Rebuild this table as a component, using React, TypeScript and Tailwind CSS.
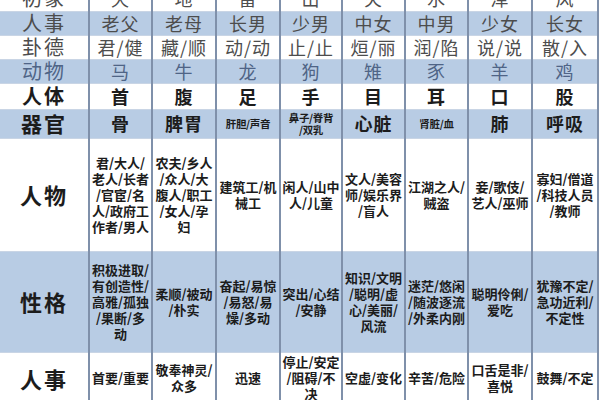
import React from "react";

type Cell = string | string[];

interface Row {
  label: string;
  cells: Cell[];
  height: string;
  blue?: boolean;
  tone: "grey" | "animal" | "bold";
  labelSize: string;
  dense?: boolean;
  small?: number[];
}

const rows: Row[] = [
  {
    label: "初象",
    cells: ["天", "地", "雷", "山", "火", "水", "泽", "风"],
    height: "h-[25px]",
    tone: "grey",
    labelSize: "text-[20px]",
  },
  {
    label: "人事",
    cells: ["老父", "老母", "长男", "少男", "中女", "中男", "少女", "长女"],
    height: "h-[24px]",
    blue: true,
    tone: "grey",
    labelSize: "text-[20px]",
  },
  {
    label: "卦德",
    cells: ["君/健", "藏/顺", "动/动", "止/止", "烜/丽", "润/陷", "说/说", "散/入"],
    height: "h-[24px]",
    tone: "grey",
    labelSize: "text-[20px]",
  },
  {
    label: "动物",
    cells: ["马", "牛", "龙", "狗", "雉", "豕", "羊", "鸡"],
    height: "h-[24px]",
    blue: true,
    tone: "animal",
    labelSize: "text-[20px]",
  },
  {
    label: "人体",
    cells: ["首", "腹", "足", "手", "目", "耳", "口", "股"],
    height: "h-[26px]",
    tone: "bold",
    labelSize: "text-[20px]",
  },
  {
    label: "器官",
    cells: ["骨", "脾胃", "肝胆/声音", ["鼻子/脊背", "/双乳"], "心脏", "肾脏/血", "肺", "呼吸"],
    height: "h-[29px]",
    blue: true,
    tone: "bold",
    labelSize: "text-[21px]",
    small: [2, 3, 5],
  },
  {
    label: "人物",
    cells: [
      ["君/大人/", "老人/长者", "/官宦/名", "人/政府工", "作者/男人"],
      ["农夫/乡人", "/众人/大", "腹人/职工", "/女人/孕", "妇"],
      ["建筑工/机", "械工"],
      ["闲人/山中", "人/儿童"],
      ["文人/美容", "师/娱乐界", "/盲人"],
      ["江湖之人/", "贼盗"],
      ["妾/歌伎/", "艺人/巫师"],
      ["寡妇/僧道", "/科技人员", "/教师"],
    ],
    height: "h-[113px]",
    tone: "bold",
    labelSize: "text-[22px]",
    dense: true,
  },
  {
    label: "性格",
    cells: [
      ["积极进取/", "有创造性/", "高雅/孤独", "/果断/多", "动"],
      ["柔顺/被动", "/朴实"],
      ["奋起/易惊", "/易怒/易", "燥/多动"],
      ["突出/心结", "/安静"],
      ["知识/文明", "/聪明/虚", "心/美丽/", "风流"],
      ["迷茫/悠闲", "/随波逐流", "/外柔内刚"],
      ["聪明伶俐/", "爱吃"],
      ["犹豫不定/", "急功近利/", "不定性"],
    ],
    height: "h-[101px]",
    blue: true,
    tone: "bold",
    labelSize: "text-[22px]",
    dense: true,
  },
  {
    label: "人事",
    cells: [
      "首要/重要",
      ["敬奉神灵/", "众多"],
      "迅速",
      ["停止/安定", "/阻碍/不", "决"],
      "空虚/变化",
      "辛苦/危险",
      ["口舌是非/", "喜悦"],
      "鼓舞/不定",
    ],
    height: "h-[52px]",
    tone: "bold",
    labelSize: "text-[22px]",
    dense: true,
  },
];

const widths = [
  "w-[89px]",
  "w-[63px]",
  "w-[64px]",
  "w-[64px]",
  "w-[62px]",
  "w-[63px]",
  "w-[63px]",
  "w-[64px]",
  "w-[66px]",
];

const toneClass = {
  grey: "font-normal text-[#4d4d4d]",
  animal: "font-normal text-[#4f6486]",
  bold: "font-bold text-[#1c1c1c]",
};

function CellText({ value }: { value: Cell }) {
  const lines = Array.isArray(value) ? value : [value];
  return (
    <>
      {lines.map((line, i) => (
        <div key={i} className="whitespace-nowrap">
          {line}
        </div>
      ))}
    </>
  );
}

export default function App() {
  return (
    <div
      className="w-[600px] h-[400px] overflow-hidden bg-white"
      style={{ fontFamily: '"Noto Sans CJK SC", "Noto Sans", sans-serif' }}
    >
      <table className="-mt-[14px] border-collapse table-fixed w-[598px]">
        <colgroup>
          {widths.map((w, i) => (
            <col key={i} className={w} />
          ))}
        </colgroup>
        <tbody>
          {rows.map((row, r) => (
            <tr
              key={r}
              className={`${row.height} ${row.blue ? "bg-[#b8cce4]" : "bg-white"} ${toneClass[row.tone]}`}
            >
              <td className={`${row.labelSize} tracking-[2px] text-center align-middle leading-[1.1] border-r-2 border-b border-r-[#7f90aa] border-b-[#c9d5e5] p-0`}>
                {row.label}
              </td>
              {row.cells.map((cell, c) => {
                const isSmall = row.small?.includes(c);
                const size = isSmall
                  ? "text-[10.5px] leading-[12px] tracking-[-0.3px]"
                  : row.dense
                    ? "text-[13px] leading-[16px]"
                    : "text-[18px] leading-[1.15] tracking-[1px]";
                return (
                  <td
                    key={c}
                    className={`${size} text-center align-middle border-r-2 border-b border-r-[#7f90aa] border-b-[#c9d5e5] p-0 overflow-hidden`}
                  >
                    <CellText value={cell} />
                  </td>
                );
              })}
            </tr>
          ))}
        </tbody>
      </table>
    </div>
  );
}
